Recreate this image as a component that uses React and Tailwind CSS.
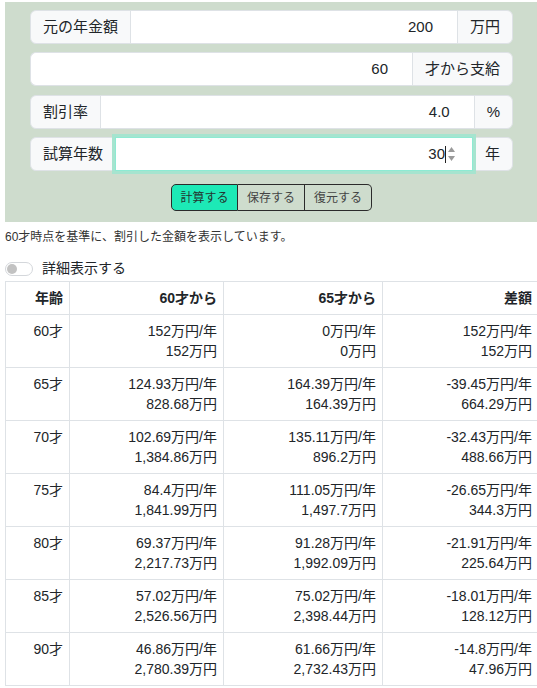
import React from "react";

const rows = [
  ["60才", "152万円/年", "152万円", "0万円/年", "0万円", "152万円/年", "152万円"],
  ["65才", "124.93万円/年", "828.68万円", "164.39万円/年", "164.39万円", "-39.45万円/年", "664.29万円"],
  ["70才", "102.69万円/年", "1,384.86万円", "135.11万円/年", "896.2万円", "-32.43万円/年", "488.66万円"],
  ["75才", "84.4万円/年", "1,841.99万円", "111.05万円/年", "1,497.7万円", "-26.65万円/年", "344.3万円"],
  ["80才", "69.37万円/年", "2,217.73万円", "91.28万円/年", "1,992.09万円", "-21.91万円/年", "225.64万円"],
  ["85才", "57.02万円/年", "2,526.56万円", "75.02万円/年", "2,398.44万円", "-18.01万円/年", "128.12万円"],
  ["90才", "46.86万円/年", "2,780.39万円", "61.66万円/年", "2,732.43万円", "-14.8万円/年", "47.96万円"],
];

function Group({ label, value, unit }) {
  return (
    <div className="flex h-[34px] text-[15px] leading-[22px] text-[#212529]">
      {label ? (
        <div className="flex items-center px-[12px] bg-[#f8f9fa] border border-[#dee2e6] rounded-l-[6px]">{label}</div>
      ) : null}
      <div
        className={
          "flex-1 flex items-center justify-end pr-[24px] bg-white border-y border-[#dee2e6] " +
          (label ? "" : "border-l rounded-l-[6px]")
        }
      >
        {value}
      </div>
      <div className="flex items-center px-[12px] bg-[#f8f9fa] border border-[#dee2e6] rounded-r-[6px]">{unit}</div>
    </div>
  );
}

export default function App() {
  return (
    <div
      className="w-[537px] h-[688px] overflow-hidden bg-white text-[#212529]"
      style={{ fontFamily: '"Liberation Sans", "Noto Sans CJK JP", sans-serif' }}
    >
      <div className="w-[533px] ml-[5px] mt-[2px] bg-[#cedccd] px-[25px] pt-[8px] pb-[11px]">
        <Group label="元の年金額" value="200" unit="万円" />
        <div className="mt-[8px]">
          <Group value="60" unit="才から支給" />
        </div>
        <div className="mt-[9px]">
          <Group label="割引率" value="4.0" unit="%" />
        </div>
        <div className="mt-[8px] flex h-[34px] text-[15px] leading-[22px]">
          <div className="flex items-center px-[12px] bg-[#f8f9fa] border border-[#dee2e6] rounded-l-[6px]">試算年数</div>
          <div className="relative z-10 -ml-px flex-1 flex items-center justify-end pr-[16px] bg-white border border-[#8eead3] shadow-[0_0_0_3px_#a6e4cf]">
            <span>30</span>
            <span className="w-px h-[17px] bg-[#222]"></span>
            <svg width="9" height="20" viewBox="0 0 9 20" className="ml-[1px]">
              <path d="M1 8 L4.5 3 L8 8 Z" fill="#9a9a9a" />
              <path d="M1 12 L4.5 17 L8 12 Z" fill="#9a9a9a" />
            </svg>
          </div>
          <div className="-ml-px flex items-center px-[12px] bg-[#f8f9fa] border border-[#dee2e6] rounded-r-[6px]">年</div>
        </div>
        <div className="mt-[13px] flex justify-center">
          <div className="flex h-[27px] text-[12px] leading-[18px]">
            <div className="w-[67px] flex items-center justify-center bg-[#1de9b6] text-[#24342f] border border-[#2b2b2b] rounded-l-[5px]">計算する</div>
            <div className="w-[67px] flex items-center justify-center text-[#444] border-y border-r border-[#2b2b2b]">保存する</div>
            <div className="w-[67px] flex items-center justify-center text-[#444] border-y border-r border-[#2b2b2b] rounded-r-[5px]">復元する</div>
          </div>
        </div>
      </div>

      <div className="ml-[5px] mt-[6px] text-[12px] leading-[18px] text-[#333]">
        60才時点を基準に、割引した金額を表示しています。
      </div>

      <div className="ml-[5px] mt-[12px] flex items-center h-[21px]">
        <div className="w-[28px] h-[14px] rounded-full border border-[#d4d7db] bg-white flex items-center">
          <div className="w-[10px] h-[10px] rounded-full bg-[#c2c2c2] ml-[1px]"></div>
        </div>
        <span className="ml-[9px] text-[14px] leading-[21px] text-[#212529]">詳細表示する</span>
      </div>

      <table className="ml-[5px] mt-[2px] w-[533px] table-fixed border-collapse text-[14px] leading-[20px] text-[#212529]">
        <colgroup>
          <col style={{ width: 64 }} />
          <col style={{ width: 154 }} />
          <col style={{ width: 159 }} />
          <col style={{ width: 156 }} />
        </colgroup>
        <thead>
          <tr>
            {["年齢", "60才から", "65才から", "差額"].map((h) => (
              <th key={h} className="border border-[#dee2e6] py-[6px] pr-[6px] text-right font-bold">
                {h}
              </th>
            ))}
          </tr>
        </thead>
        <tbody>
          {rows.map((r) => (
            <tr key={r[0]}>
              <td className="border border-[#dee2e6] py-[6px] pr-[6px] text-right align-top">{r[0]}</td>
              <td className="border border-[#dee2e6] py-[6px] pr-[6px] text-right align-top">
                <div>{r[1]}</div>
                <div>{r[2]}</div>
              </td>
              <td className="border border-[#dee2e6] py-[6px] pr-[6px] text-right align-top">
                <div>{r[3]}</div>
                <div>{r[4]}</div>
              </td>
              <td className="border border-[#dee2e6] py-[6px] pr-[6px] text-right align-top">
                <div>{r[5]}</div>
                <div>{r[6]}</div>
              </td>
            </tr>
          ))}
        </tbody>
      </table>
    </div>
  );
}
